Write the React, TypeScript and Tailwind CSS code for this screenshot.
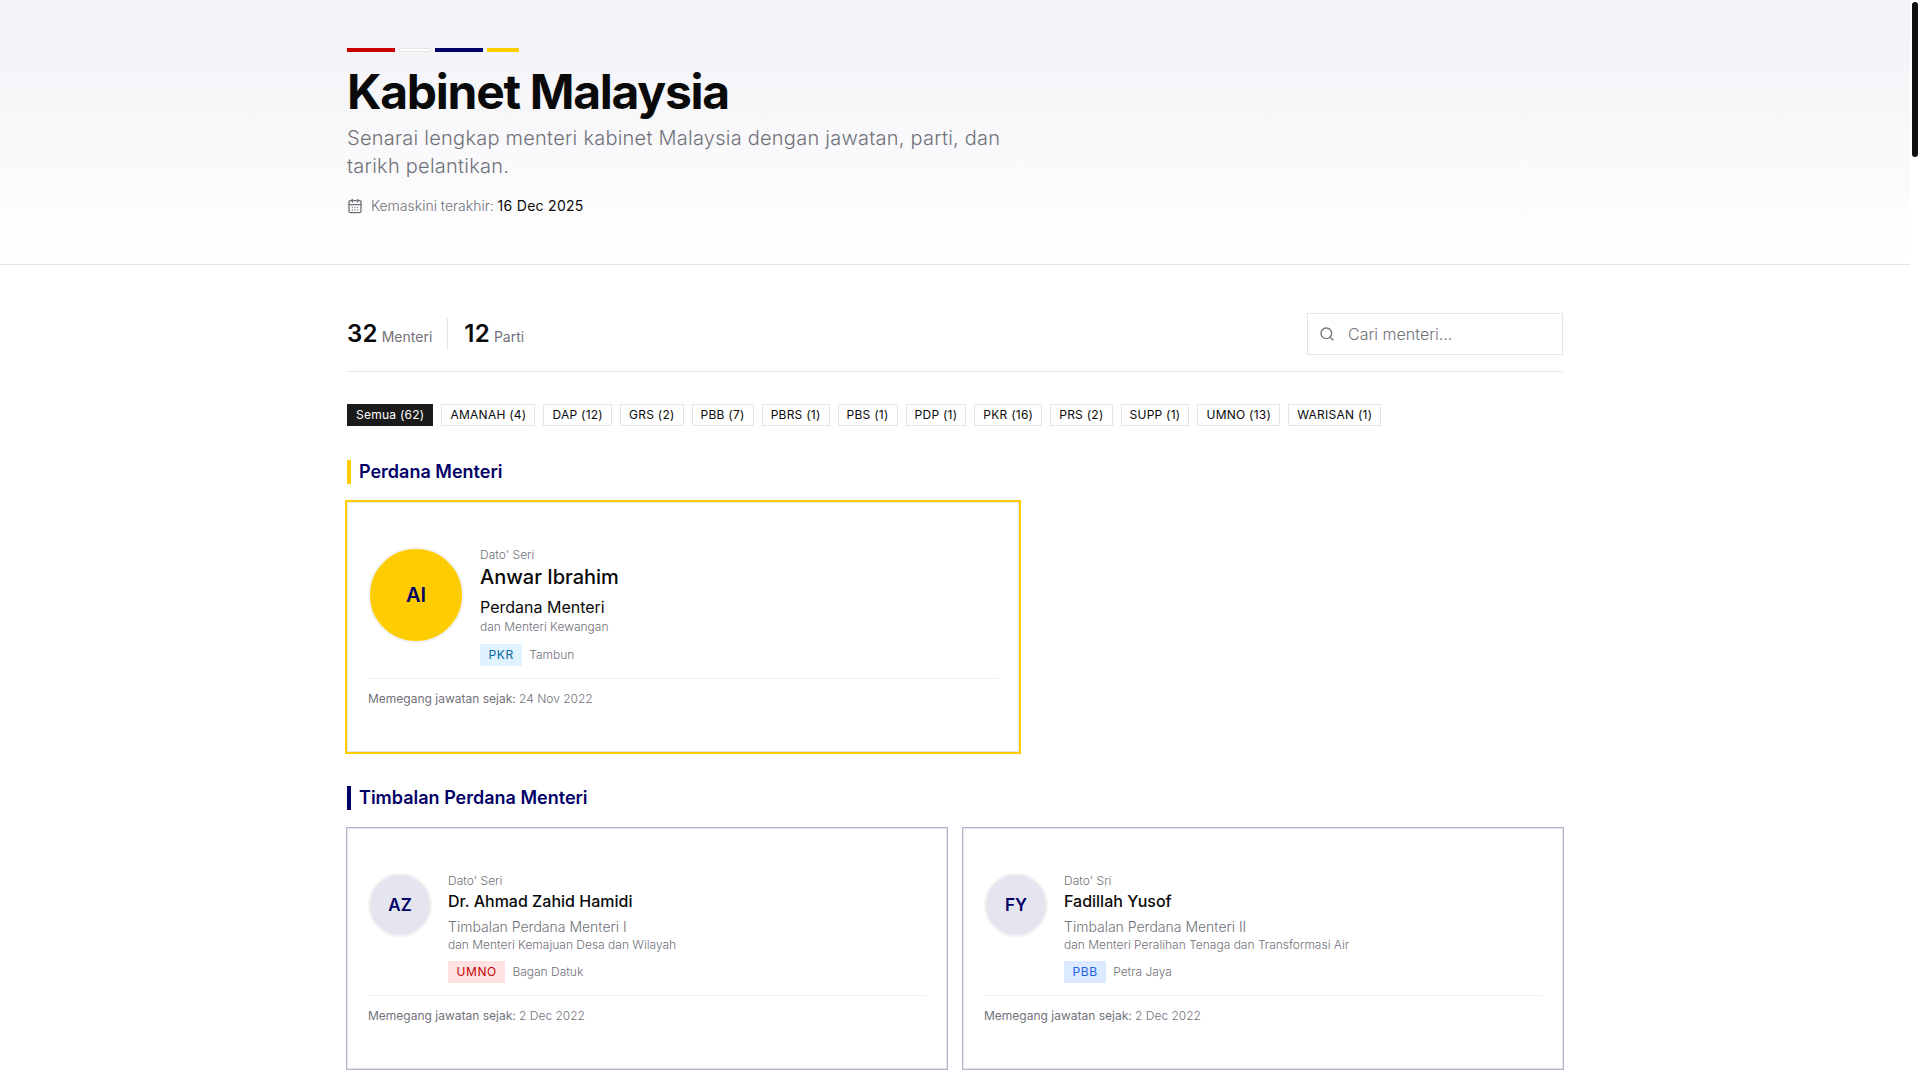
import { CalendarDays, Search } from 'lucide-react';

type Minister = {
  initials: string;
  title: string;
  name: string;
  role: string;
  extra: string;
  party: string;
  partyClass: string;
  seat: string;
  since: string;
};

const filters = [
  'AMANAH (4)',
  'DAP (12)',
  'GRS (2)',
  'PBB (7)',
  'PBRS (1)',
  'PBS (1)',
  'PDP (1)',
  'PKR (16)',
  'PRS (2)',
  'SUPP (1)',
  'UMNO (13)',
  'WARISAN (1)',
];

const pm: Minister = {
  initials: 'AI',
  title: "Dato' Seri",
  name: 'Anwar Ibrahim',
  role: 'Perdana Menteri',
  extra: 'dan Menteri Kewangan',
  party: 'PKR',
  partyClass: 'bg-[#e0f2fe] text-[#0369a1]',
  seat: 'Tambun',
  since: '24 Nov 2022',
};

const deputies: Minister[] = [
  {
    initials: 'AZ',
    title: "Dato' Seri",
    name: 'Dr. Ahmad Zahid Hamidi',
    role: 'Timbalan Perdana Menteri I',
    extra: 'dan Menteri Kemajuan Desa dan Wilayah',
    party: 'UMNO',
    partyClass: 'bg-[#fee2e2] text-[#cc0000]',
    seat: 'Bagan Datuk',
    since: '2 Dec 2022',
  },
  {
    initials: 'FY',
    title: "Dato' Sri",
    name: 'Fadillah Yusof',
    role: 'Timbalan Perdana Menteri II',
    extra: 'dan Menteri Peralihan Tenaga dan Transformasi Air',
    party: 'PBB',
    partyClass: 'bg-[#dbeafe] text-[#2563eb]',
    seat: 'Petra Jaya',
    since: '2 Dec 2022',
  },
];

const SectionTitle = ({ label, barClass }: { label: string; barClass: string }) => (
  <h2 className={`mb-[18px] border-l-4 pl-2 text-lg leading-6 font-semibold text-[#000066] ${barClass}`}>{label}</h2>
);

const PartyRow = ({ m, className }: { m: Minister; className: string }) => (
  <div className={`flex items-center gap-[7px] ${className}`}>
    <span className={`px-[8.5px] py-[3px] text-xs leading-4 font-normal tracking-[0.05em] ${m.partyClass}`}>{m.party}</span>
    <span className="text-xs leading-4 font-light text-[#71717a]">{m.seat}</span>
  </div>
);

const Since = ({ date }: { date: string }) => (
  <div className="mt-3 border-t border-[#f0f0f0] pt-3 text-xs leading-4 font-light text-[#71717a]">
    <span className="font-normal">Memegang jawatan sejak:</span> {date}
  </div>
);

const DeputyCard = ({ m }: { m: Minister }) => (
  <div className="border border-[#e5e5e5] bg-white px-5 py-11 ring-1 ring-[#b3b3d1]">
    <div className="flex gap-4">
      <div className="flex h-16 w-16 shrink-0 items-center justify-center rounded-full border-2 border-[#f3f3f3] bg-[#e5e5f0] text-[17px] leading-6 font-semibold text-[#000066]">
        {m.initials}
      </div>
      <div>
        <div className="text-xs leading-4 font-light text-[#71717a]">{m.title}</div>
        <div className="text-base leading-6 font-medium text-[#0a0a0a]">{m.name}</div>
        <div className="mt-1 text-sm leading-5 font-light text-[#71717a]">{m.role}</div>
        <div className="text-xs leading-4 font-light text-[#71717a]">{m.extra}</div>
        <PartyRow m={m} className="mt-2" />
      </div>
    </div>
    <Since date={m.since} />
  </div>
);

export default function App() {
  return (
    <div className="flex h-screen overflow-hidden bg-white font-['Inter',sans-serif] text-[#0a0a0a]">
      <div className="w-[1910px] shrink-0">
        <header className="border-b border-[#e5e5e5] bg-linear-to-b from-[#f2f2f7] to-white">
          <div className="mx-auto max-w-[1280px] px-8 pt-12 pb-12">
            <div className="mb-4 flex gap-1">
              <div className="h-1 w-12 bg-[#cc0000]" />
              <div className="h-1 w-8 border border-[#e5e5e5] bg-white" />
              <div className="h-1 w-12 bg-[#000066]" />
              <div className="h-1 w-8 bg-[#ffcc00]" />
            </div>
            <h1 className="text-5xl leading-12 font-bold tracking-[-1.28px]">Kabinet Malaysia</h1>
            <p className="mt-2 max-w-2xl text-xl leading-7 font-light tracking-[0.012em] text-[#71717a]">
              Senarai lengkap menteri kabinet Malaysia dengan jawatan, parti, dan tarikh pelantikan.
            </p>
            <div className="mt-4 flex items-center gap-2 text-sm leading-5 font-light text-[#71717a]">
              <CalendarDays className="h-4 w-4" />
              <span>
                Kemaskini terakhir: <span className="font-normal tracking-[0.02em] text-[#0a0a0a]">16 Dec 2025</span>
              </span>
            </div>
          </div>
        </header>

        <main className="mx-auto max-w-[1280px] px-8 pt-12">
          <div className="flex items-center justify-between border-b border-[#e5e5e5] pb-4">
            <div className="flex items-center">
              <div className="flex items-baseline gap-1 border-r border-[#e5e5e5] pr-[15px]">
                <span className="text-2xl leading-8 font-semibold tracking-[0.01em]">32</span>
                <span className="text-sm font-normal text-[#71717a]">Menteri</span>
              </div>
              <div className="flex items-baseline gap-1 pl-4">
                <span className="text-2xl leading-8 font-semibold tracking-[0.01em]">12</span>
                <span className="text-sm font-normal text-[#71717a]">Parti</span>
              </div>
            </div>
            <label className="flex h-[42px] w-64 items-center gap-[13px] border border-[#e5e5e5] bg-white px-[11px]">
              <Search className="h-4 w-4 shrink-0 text-[#71717a]" />
              <input
                placeholder="Cari menteri..."
                className="w-full bg-transparent text-base font-light outline-none placeholder:text-[#71717a]"
              />
            </label>
          </div>

          <div className="mt-8 mb-[34px] flex gap-2">
            <button className="border border-[#1a1a1a] bg-[#1a1a1a] px-2 text-xs leading-5 font-normal tracking-[0.25px] text-white">Semua (62)</button>
            {filters.map((f) => (
              <button key={f} className="border border-[#e5e5e5] bg-white px-2 text-xs leading-5 font-normal tracking-[0.25px]">
                {f}
              </button>
            ))}
          </div>

          <SectionTitle label="Perdana Menteri" barClass="border-[#ffcc00]" />
          <div className="mb-[34px] w-[672px] border border-[#e5e5e5] bg-white px-5 py-11 ring-2 ring-[#ffcc00]">
            <div className="flex gap-4">
              <div className="flex h-24 w-24 shrink-0 items-center justify-center rounded-full border-2 border-[#f3f3f3] bg-[#ffcc00] text-xl font-semibold text-[#000066]">
                {pm.initials}
              </div>
              <div>
                <div className="text-xs leading-4 font-light text-[#71717a]">{pm.title}</div>
                <div className="text-xl leading-7 font-medium">{pm.name}</div>
                <div className="mt-1 text-base leading-6 font-normal">{pm.role}</div>
                <div className="text-xs leading-4 font-light text-[#71717a]">{pm.extra}</div>
                <PartyRow m={pm} className="mt-[9px]" />
              </div>
            </div>
            <Since date={pm.since} />
          </div>

          <SectionTitle label="Timbalan Perdana Menteri" barClass="border-[#000066]" />
          <div className="grid grid-cols-2 gap-4">
            {deputies.map((m) => (
              <DeputyCard key={m.name} m={m} />
            ))}
          </div>
        </main>
      </div>

      {/* page scrollbar */}
      <div className="w-[10px] shrink-0 pt-[2px] pl-[2px]">
        <div className="h-[155px] w-[6px] rounded-[3px] bg-[#111111]" />
      </div>
    </div>
  );
}
